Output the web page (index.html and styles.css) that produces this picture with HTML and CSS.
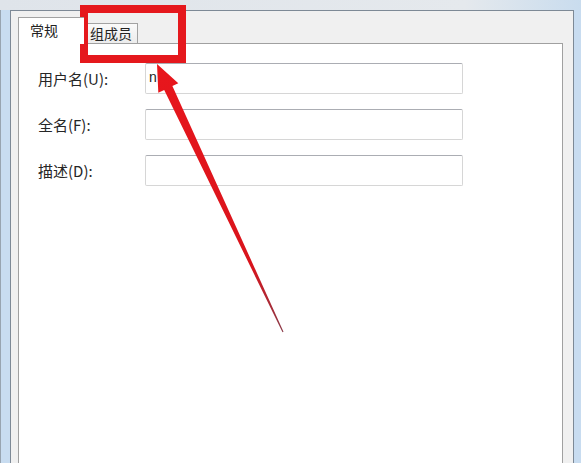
FILE: index.html
```html
<!DOCTYPE html>
<html lang="zh-CN">
<head>
  <meta charset="UTF-8">
  <title>用户属性</title>
  <link rel="stylesheet" href="styles.css">
</head>
<body>

<div class="frame">
  <div class="titlebar"></div>
  <div class="window">
    <div class="tabs">
      <div class="tab active">常规</div>
      <div class="tab">组成员</div>
    </div>
    <div class="panel">
      <div class="form">
        <label class="label">用户名(U):</label>
        <div class="input">n</div>
        <label class="label">全名(F):</label>
        <div class="input"></div>
        <label class="label">描述(D):</label>
        <div class="input"></div>
      </div>
    </div>
  </div>
</div>

<!-- annotation drawn over the dialog -->
<div class="mark"></div>
<svg class="arrow" width="581" height="463" viewBox="0 0 581 463">
  <defs>
    <linearGradient id="shade" x1="157" y1="64" x2="283" y2="332" gradientUnits="userSpaceOnUse">
      <stop offset="0" stop-color="#e8161c"/>
      <stop offset="0.75" stop-color="#d9141c"/>
      <stop offset="1" stop-color="#8a3a48"/>
    </linearGradient>
  </defs>
  <polygon fill="url(#shade)"
    points="157,64 178.3,83.3 172.4,86.1 283.5,331.7 282.5,332.3 164.2,89.9 158.3,92.7"/>
</svg>

</body>
</html>
```

FILE: styles.css
```css
body {
  margin: 0;
  width: 581px;
  height: 463px;
  overflow: hidden;
  position: relative;
  font-family: "Noto Sans CJK SC", "Liberation Sans", sans-serif;
  color: #222;
}
.frame {
  height: 463px;
  box-sizing: border-box;
  display: flex;
  flex-direction: column;
  padding: 0 7px 0 9px;
  background: #c8dcf0;
  border-left: 1px solid #98a4b0;
}
.titlebar {
  height: 10px;
  flex: none;
  margin: 0 -7px 0 -10px;
  background: linear-gradient(to right, #dfe4ea, #e5e9ed 80%, #c9dcee);
}
.window {
  flex: 1;
  display: flex;
  flex-direction: column;
  padding: 6px 10px 0 7px;
  background: #f0f0f0;
  border: 1px solid #7d8996;
  border-bottom: none;
}
.tabs {
  display: flex;
  align-items: flex-end;
  height: 26px;
  flex: none;
}
.tab {
  height: 19px;
  line-height: 19px;
  padding: 0 5px;
  font-size: 14px;
  background: linear-gradient(#fafafa, #ececec);
  border: 1px solid #a2a2a2;
  border-bottom: none;
}
.tab.active {
  height: 26px;
  line-height: 25px;
  padding: 0 26px 0 11px;
  margin-bottom: -1px;
  background: #fff;
  border-right: none;
  position: relative;
  z-index: 1;
}
.panel {
  flex: 1;
  background: #fff;
  border: 1px solid #a0a0a0;
  border-bottom: none;
  padding: 19px 0 0 19px;
}
.form {
  display: grid;
  grid-template-columns: 107px 318px;
  grid-auto-rows: 31px;
  row-gap: 15px;
  align-items: center;
}
.label {
  font-size: 15px;
  color: #262626;
}
.input {
  height: 31px;
  box-sizing: border-box;
  padding: 5px 3px;
  font-family: "Liberation Sans", sans-serif;
  font-size: 14px;
  border: 1px solid #d6d6d6;
  border-top-color: #abadb3;
  border-radius: 2px;
}
.mark {
  position: absolute;
  left: 80px;
  top: 5px;
  width: 106px;
  height: 58px;
  box-sizing: border-box;
  border: 8px solid #e5181d;
}
.arrow {
  position: absolute;
  left: 0;
  top: 0;
  pointer-events: none;
}
```
